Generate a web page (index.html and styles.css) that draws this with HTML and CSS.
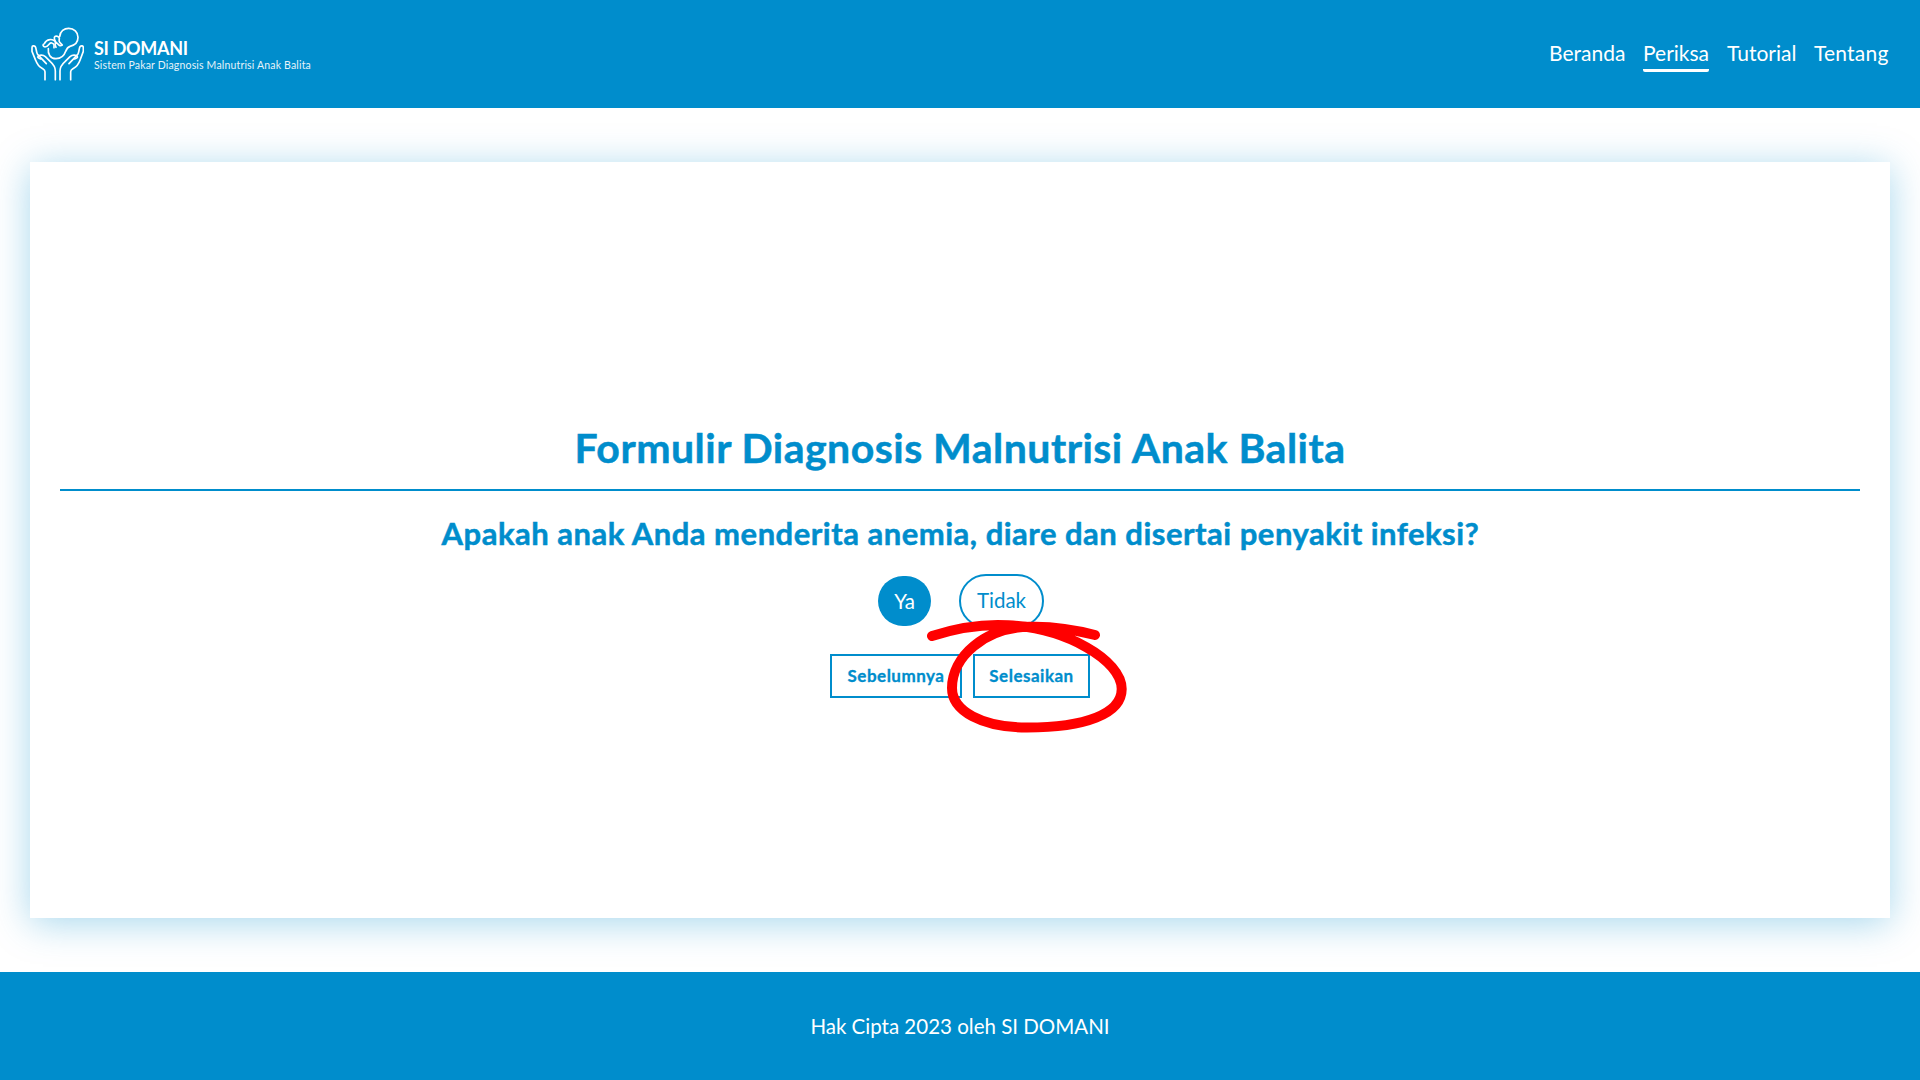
FILE: index.html
```html
<!DOCTYPE html>
<html lang="id">
<head>
<meta charset="utf-8">
<title>SI DOMANI</title>
<link rel="stylesheet" href="styles.css">
</head>
<body>
<header class="header">
  <a class="brand">
    <svg class="logo" viewBox="30 36 162 162" fill="none" stroke="#fff" stroke-width="5" stroke-linecap="round" stroke-linejoin="round">
      <path d="M119 65C120 48 133 40 146 40C162 40 174 52 174 67C174 81 165 91 150 94C143 96 140 101 137 109C132 124 122 131 108 131C91 131 83 117 85 101"/>
      <path d="M102 98V89C99 83 92 82 88 87C85 91 81 96 75 96C68 95 67 88 73 86C76 80 82 75 89 74C97 72 101 75 106 79"/>
      <path d="M106 79C103 73 102 66 106 64C111 62 117 65 118 70C118 75 115 77 120 83L127 90C124 92 121 93 118 91L106 80C105 87 106 93 108 97"/>
      <path d="M75 194V170C75 164 71 163 66 160C57 155 51 147 47 136L36 109V98C36 92 42 91 46 95C49 99 48 109 52 117L64 130L79 146"/>
      <path d="M106 194V168C106 154 100 148 91 140L76 125C69 119 58 119 54 124C52 128 57 130 62 132"/>
      <path d="M152 194V170C152 164 156 163 161 160C170 155 176 147 180 136L190 109V98C190 92 184 91 180 95C177 99 178 109 174 117L162 130L147 146"/>
      <path d="M120 194V168C120 154 126 148 135 140L150 125C157 119 168 119 172 124C174 128 169 130 164 132"/>
    </svg>
    <span class="brand-text">
      <strong class="brand-name">SI DOMANI</strong>
      <span class="brand-sub">Sistem Pakar Diagnosis Malnutrisi Anak Balita</span>
    </span>
  </a>
  <nav class="nav">
    <a class="nav-beranda">Beranda</a>
    <a class="nav-periksa active">Periksa</a>
    <a class="nav-tutorial">Tutorial</a>
    <a class="nav-tentang">Tentang</a>
  </nav>
</header>
<main class="main">
  <section class="card">
    <h1 class="title"><span>Formulir Diagnosis Malnutrisi Anak Balita</span></h1>
    <h2 class="question"><span>Apakah anak Anda menderita anemia, diare dan disertai penyakit infeksi?</span></h2>
    <div class="answers">
      <span class="pill selected">Ya</span>
      <span class="pill">Tidak</span>
    </div>
    <div class="actions">
      <button class="btn btn-prev">Sebelumnya</button>
      <div class="finish">
        <button class="btn btn-finish">Selesaikan</button>
        <svg class="marker" viewBox="0 0 210 120" fill="none" stroke="#f00" stroke-width="10" stroke-linecap="round">
          <path d="M12 21C40 12 66 9 88 10.300C146 13 201.700 45 201.700 74C201.700 99 165 112.500 107 112.500C62 112.500 32 96 32 73C32 42 64 12.500 110 11.700C137 11 160 16 175 20"/>
        </svg>
      </div>
    </div>
  </section>
</main>
<footer class="footer"><span>Hak Cipta 2023 oleh SI DOMANI</span></footer>
</body>
</html>
```
FILE: styles.css
```css
* { box-sizing: border-box; }
body {
  margin: 0;
  height: 1080px;
  display: flex;
  flex-direction: column;
  font-family: Lato, sans-serif;
  color: #008dcc;
  background: #fff;
}
.header {
  height: 108px;
  padding: 0 30px;
  display: flex;
  align-items: center;
  justify-content: space-between;
  background: #008dcc;
  color: #fff;
}
.brand { display: flex; align-items: center; gap: 10px; }
.logo { width: 54px; height: 54px; }
.brand-text { display: flex; flex-direction: column; padding-top: 2px; white-space: nowrap; }
.brand-name { font-size: 18px; line-height: 20px; letter-spacing: -.3px; }
.brand-sub { font-size: 10.5px; line-height: 15px; letter-spacing: .17px; opacity: .9; }
.nav { display: flex; gap: 18px; font-size: 21px; line-height: 30px; }
.nav a { border-bottom: 3px solid transparent; padding-top: 1px; padding-bottom: 1px; margin-top: 1px; white-space: nowrap; }
.nav .active { border-bottom-color: #fff; border-radius: 2px; }
.nav-beranda { width: 76px; }
.nav-periksa { width: 66px; }
.nav-tutorial { width: 69px; }
.nav-tentang { width: 76px; letter-spacing: .2px; }
.main { flex: 1; padding: 54px 30px; }
.card {
  height: 756px;
  padding: 255px 30px 0;
  box-shadow: 0 5px 36px rgba(0, 141, 204, .35);
}
.title, .question { margin: 0; text-align: center; white-space: nowrap; -webkit-text-stroke: .5px #008dcc; }
.title {
  height: 74px;
  border-bottom: 2px solid #008dcc;
  font-size: 41px;
  line-height: 62px;
  letter-spacing: .48px;
  font-weight: 700;
}
.question { height: 83px; padding: 20px 0 0 1px; font-size: 31px; line-height: 45px; letter-spacing: .5px; }
.answers { display: flex; justify-content: center; align-items: center; gap: 28px; padding-left: 2px; height: 54px; }
.pill {
  width: 85px;
  height: 54px;
  border: 2px solid #008dcc;
  border-radius: 27px;
  font-size: 20.5px;
  line-height: 48px;
  text-align: center;
}
.selected { width: 53px; height: 50px; border: 0; border-radius: 25px; background: #008dcc; color: #fff; line-height: 50px; }
.actions { display: flex; justify-content: center; gap: 11px; margin-top: 26px; }
.btn {
  height: 44px;
  padding: 0;
  border: 2px solid #008dcc;
  background: #fff;
  color: #008dcc;
  font: bold 17px/40px Lato, sans-serif;
  letter-spacing: .5px;
  -webkit-text-stroke: .3px #008dcc;
  display: block;
}
.btn-prev { width: 132px; }
.btn-finish { width: 117px; }
.finish { position: relative; }
.marker { position: absolute; left: -53px; top: -39px; width: 210px; height: 120px; pointer-events: none; }
.footer {
  height: 108px;
  padding-bottom: 1px;
  display: flex;
  align-items: center;
  justify-content: center;
  background: #008dcc;
  color: #fff;
  font-size: 20.5px;
}
```
